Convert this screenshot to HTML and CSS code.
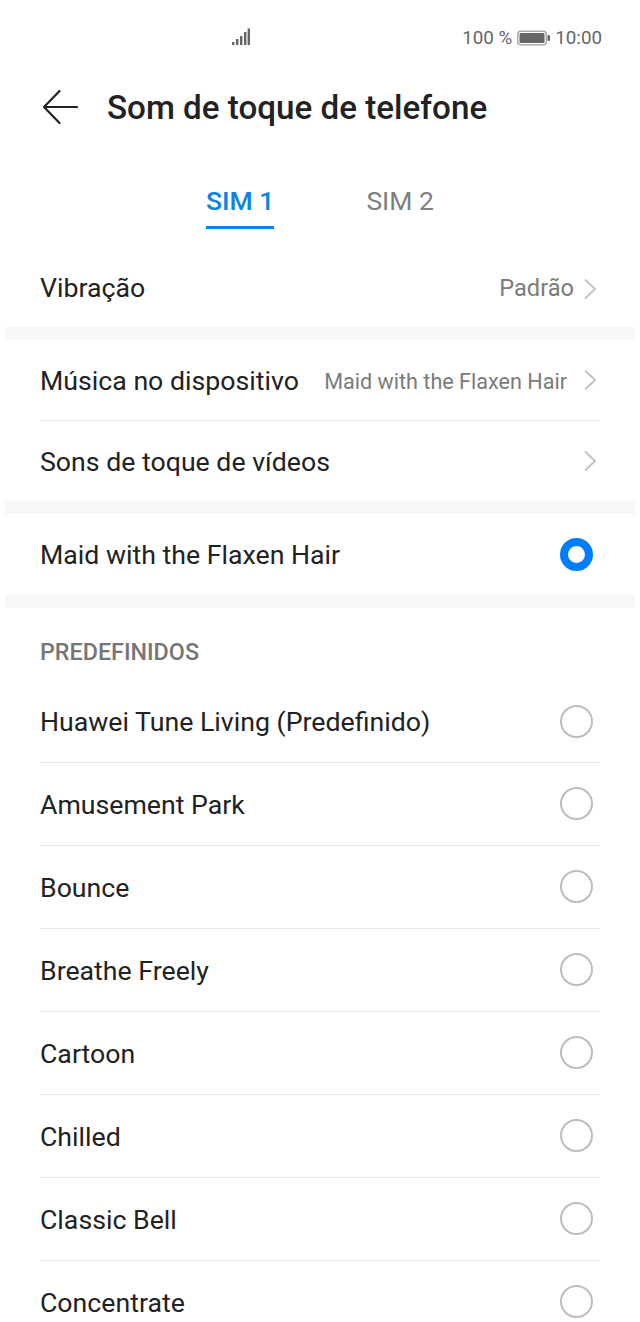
FILE: index.html
```html
<!DOCTYPE html>
<html lang="pt">
<head>
<meta charset="utf-8">
<title>Som de toque de telefone</title>
<link rel="stylesheet" href="styles.css">
</head>
<body>
<div class="phone">
  <div class="status">
    <svg class="signal" width="20" height="18" viewBox="0 0 20 18"><g fill="#666"><rect x="0" y="14" width="2.4" height="3"/><rect x="4" y="11" width="2.4" height="6"/><rect x="8" y="8" width="2.4" height="9"/><rect x="12" y="4" width="2.4" height="13"/><rect x="15.6" y="0.5" width="2.4" height="16.5"/></g></svg>
    <div class="status-right">
      <span>100 %</span>
      <svg class="battery" width="33" height="16" viewBox="0 0 33 16"><rect x="0.75" y="1.25" width="28.5" height="13.5" rx="3" fill="none" stroke="#aaa" stroke-width="1.5"/><rect x="2.5" y="3" width="25" height="10" rx="1.5" fill="#666"/><rect x="30.5" y="5" width="2.5" height="6" rx="1" fill="#666"/></svg>
      <span>10:00</span>
    </div>
  </div>
  <header class="title-bar">
    <svg class="back" width="36" height="36" viewBox="0 0 36 36"><path d="M17.5 2 L2 18 L17.5 34 M2 18 H35" fill="none" stroke="#222" stroke-width="2.2" stroke-linecap="round" stroke-linejoin="round"/></svg>
    <h1>Som de toque de telefone</h1>
  </header>
  <nav class="tabs">
    <span class="tab active">SIM 1</span>
    <span class="tab">SIM 2</span>
  </nav>
  <div class="row row-first">
    <span class="label">Vibração</span>
    <span class="value">Padrão</span>
    <svg class="chev" width="14" height="22" viewBox="0 0 14 22"><path d="M2 1.5 L12 11 L2 20.5" fill="none" stroke="#c4c4c4" stroke-width="2"/></svg>
  </div>
  <div class="band"></div>
  <div class="row row-link divided">
    <span class="label">Música no dispositivo</span>
    <span class="value small">Maid with the Flaxen Hair</span>
    <svg class="chev" width="14" height="22" viewBox="0 0 14 22"><path d="M2 1.5 L12 11 L2 20.5" fill="none" stroke="#c4c4c4" stroke-width="2"/></svg>
  </div>
  <div class="row row-last">
    <span class="label">Sons de toque de vídeos</span>
    <svg class="chev chev-alone" width="14" height="22" viewBox="0 0 14 22"><path d="M2 1.5 L12 11 L2 20.5" fill="none" stroke="#c4c4c4" stroke-width="2"/></svg>
  </div>
  <div class="band"></div>
  <div class="row row-selected">
    <span class="label">Maid with the Flaxen Hair</span>
    <span class="radio on"></span>
  </div>
  <div class="band"></div>
  <div class="section">PREDEFINIDOS</div>
  <ul class="list">
    <li class="item first"><span class="label">Huawei Tune Living (Predefinido)</span><span class="radio"></span></li>
    <li class="item"><span class="label">Amusement Park</span><span class="radio"></span></li>
    <li class="item"><span class="label">Bounce</span><span class="radio"></span></li>
    <li class="item"><span class="label">Breathe Freely</span><span class="radio"></span></li>
    <li class="item"><span class="label">Cartoon</span><span class="radio"></span></li>
    <li class="item"><span class="label">Chilled</span><span class="radio"></span></li>
    <li class="item"><span class="label">Classic Bell</span><span class="radio"></span></li>
    <li class="item"><span class="label">Concentrate</span><span class="radio"></span></li>
  </ul>
</div>
</body>
</html>
```
FILE: styles.css
```css
* { box-sizing: border-box; }
html, body { margin: 0; padding: 0; background: #fff; }
body { font-family: Roboto, "Liberation Sans", sans-serif; color: #222; }
.phone { width: 640px; height: 1322px; overflow: hidden; background: #fff; }
.status { height: 76px; display: flex; align-items: flex-start; padding: 28px 38px 0 232px; justify-content: space-between; color: #666; font-size: 18.8px; line-height: 20px; }
.signal { display: block; }
.status-right { display: flex; align-items: center; gap: 5px; }
.battery { display: block; }
.title-bar { height: 62px; display: flex; align-items: center; padding-left: 42px; }
.back { display: block; }
.title-bar h1 { margin: 2px 0 0 29px; font-size: 33.2px; font-weight: 500; color: #222; line-height: 60px; }
.tabs { height: 112px; display: flex; align-items: flex-start; padding: 48px 0 0 206px; gap: 92px; }
.tab { font-size: 26.5px; line-height: 30px; padding-bottom: 10px; color: #7f7f7f; }
.tab.active { color: #0a84e8; font-weight: 500; border-bottom: 3px solid #0a84e8; }
.row { display: flex; align-items: center; margin: 0 40px; }
.row-first { height: 77px; }
.row-first .label, .row-first .value { margin-bottom: 2px; }
.row-link { height: 81px; }
.row-link .label, .row-link .value, .row-last .label { margin-top: 2px; }
.row-last { height: 80px; }
.row-selected { height: 81px; }
.divided { border-bottom: 1px solid #e6e6e6; }
.label { font-size: 26.7px; line-height: 32px; color: #222; white-space: nowrap; }
.value { margin-left: auto; font-size: 23.6px; color: #7b7b7b; white-space: nowrap; }
.value.small { font-size: 21.6px; }
.chev { display: block; margin: 0 3px 0 9px; flex: none; }
.row-link .chev { margin-left: 16px; }
.chev-alone { margin-left: auto; }
.band { height: 13px; margin: 0 5px; background: #f7f7f7; }
.section { height: 73px; padding: 30px 40px 0; font-size: 23.3px; line-height: 28px; font-weight: 500; color: #767676; }
.list { list-style: none; margin: 0 40px; padding: 0; }
.item { height: 83px; display: flex; align-items: center; justify-content: space-between; border-bottom: 1px solid #e6e6e6; }
.item .label { margin-top: 2px; }
.item.first { height: 82px; }
.item.first .label { margin-top: 0; }
.radio { width: 33px; height: 33px; border-radius: 50%; border: 2px solid #bdbdbd; margin: 0 7px 1px auto; flex: none; }
.radio.on { border: 8px solid #007dff; }
```
